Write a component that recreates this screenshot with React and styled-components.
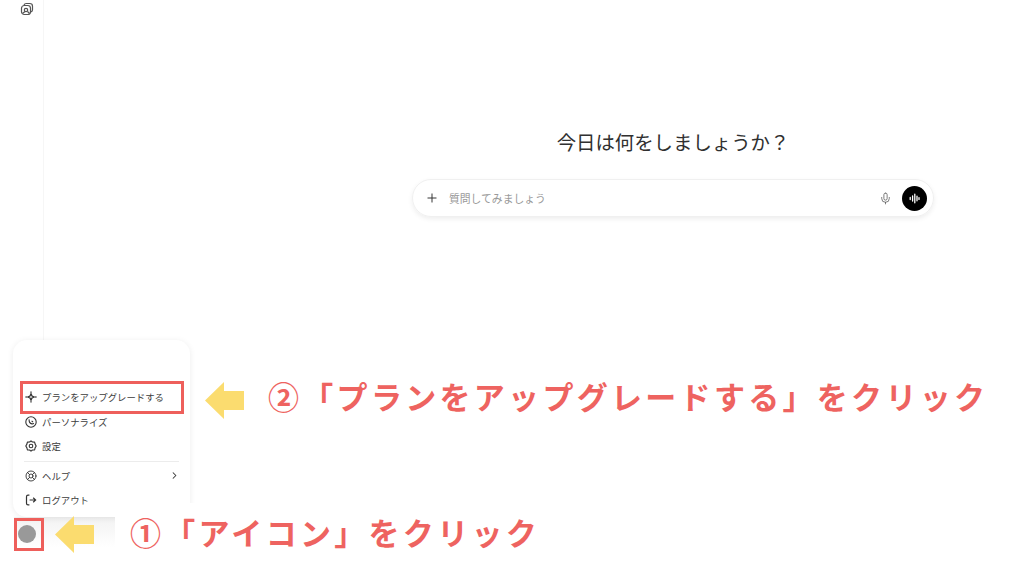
import React from "react";
import styled, { createGlobalStyle } from "styled-components";
import { ChevronRight, LifeBuoy, Mic, Plus } from "lucide-react";

const GlobalStyle = createGlobalStyle`
  html, body {
    margin: 0;
    padding: 0;
    background: #fff;
  }
  body {
    font-family: "Noto Sans CJK JP", "Noto Sans", sans-serif;
  }
`;

const Page = styled.div`
  position: relative;
  display: flex;
  width: 1024px;
  height: 576px;
  overflow: hidden;
  background: #fff;
`;

const Sidebar = styled.aside`
  width: 44px;
  height: 517px;
  box-sizing: border-box;
  padding: 2px 0 0 20px;
  border-right: 1px solid #f6f6f6;
  color: #555;

  svg {
    display: block;
  }
`;

const Main = styled.main`
  flex: 1;
  padding: 128px 0 0 368px;
`;

const Title = styled.h1`
  width: 522px;
  margin: 0 0 23px;
  font-size: 19.4px;
  line-height: 28px;
  font-weight: 400;
  text-align: center;
  color: #303030;
`;

const Composer = styled.div`
  display: flex;
  align-items: center;
  width: 522px;
  height: 38px;
  box-sizing: border-box;
  padding: 0 6px 0 12px;
  border: 1px solid #f0f0f0;
  border-radius: 19px;
  box-shadow: 0 2px 5px rgba(0, 0, 0, 0.07);
  color: #333;
`;

const Placeholder = styled.span`
  flex: 1;
  margin-left: 10px;
  font-size: 10.8px;
  color: #999;
`;

const VoiceButton = styled.span`
  display: flex;
  align-items: center;
  justify-content: center;
  width: 25px;
  height: 25px;
  margin-left: 10px;
  border-radius: 50%;
  background: #000;
  color: #fff;
`;

const MenuShadow = styled.div`
  position: absolute;
  left: 14px;
  top: 517px;
  width: 101px;
  height: 30px;
  background: linear-gradient(#f2f2f2, #fff);
`;

const Menu = styled.nav`
  position: absolute;
  left: 13px;
  top: 340px;
  width: 177px;
  height: 177px;
  box-sizing: border-box;
  padding: 45px 7px 0;
  border-radius: 14px;
  background: #fff;
  box-shadow: 0 1px 6px rgba(0, 0, 0, 0.08);
`;

const MenuItem = styled.div`
  display: flex;
  align-items: center;
  gap: 5px;
  height: 24.5px;
  padding: 0 3px 0 5px;
  font-size: 9.4px;
  color: #3c3c3c;
  white-space: nowrap;

  svg {
    flex: none;
    color: #333;
  }
`;

const MenuLabel = styled.span`
  flex: 1;
`;

const Divider = styled.hr`
  height: 1px;
  margin: 2px 4px;
  border: 0;
  background: #ececec;
`;

const Highlight = styled.div`
  position: absolute;
  left: ${(p) => p.$left}px;
  top: ${(p) => p.$top}px;
  width: ${(p) => p.$width}px;
  height: ${(p) => p.$height}px;
  box-sizing: border-box;
  border: 3px solid #ee5f5b;
`;

const Avatar = styled.span`
  position: absolute;
  left: 18px;
  top: 525px;
  width: 18px;
  height: 18px;
  border-radius: 50%;
  background: #999;
`;

const Arrow = styled.svg`
  position: absolute;
  left: ${(p) => p.$left}px;
  top: ${(p) => p.$top}px;
`;

const Callout = styled.div`
  position: absolute;
  left: ${(p) => p.$left}px;
  top: ${(p) => p.$top}px;
  padding: ${(p) => p.$padding};
  background: #fff;
  font-size: 31px;
  line-height: 36px;
  font-weight: 700;
  letter-spacing: 3.3px;
  color: #ee6360;
  white-space: nowrap;
`;

const CardsIcon = () => (
  <svg width="14" height="14" viewBox="0 0 14 14" fill="none" stroke="currentColor" strokeWidth="1.2">
    <rect x="1.5" y="3.5" width="9" height="9" rx="2.8" />
    <path d="M4 3.2C4.4 2 5 1.5 6.2 1.5h3.6c1.6 0 2.7 1.1 2.7 2.7v3.6c0 1-.5 1.8-1.6 2.2" />
    <circle cx="6" cy="8" r="1.7" />
    <path d="M2.5 11.5 5 9.5M7.5 9.5l2 2" />
  </svg>
);

const SparkIcon = () => (
  <svg width="12" height="12" viewBox="0 0 12 12" fill="none" stroke="currentColor" strokeWidth="1.3">
    <path d="M6 2.8 7 5l2.2 1L7 7 6 9.2 5 7 2.8 6 5 5z" />
    <path d="M6 .5v1.2M6 10.3v1.2M.5 6h1.2M10.3 6h1.2" />
  </svg>
);

const PersonalizeIcon = () => (
  <svg width="12" height="12" viewBox="0 0 12 12" fill="none" stroke="currentColor" strokeWidth="1.1">
    <circle cx="6" cy="6" r="5.2" />
    <path d="M4.2 3.4C3.8 5.6 4.8 7.6 7 7.9c.9.1 1.4-.2 1.8-.7" />
    <path d="M6.6 4.8 8 6" />
  </svg>
);

const GearIcon = () => (
  <svg width="12" height="12" viewBox="0 0 12 12" fill="none" stroke="currentColor" strokeWidth="1.1">
    <path d="M6 .8 7.4 2l2.2.1.5 2L11.2 6l-1.1 1.9-.5 2-2.2.1L6 11.2 4.6 10l-2.2-.1-.5-2L.8 6l1.1-1.9.5-2L4.6 2z" strokeLinejoin="round" />
    <circle cx="6" cy="6" r="1.8" />
  </svg>
);

const LogoutIcon = () => (
  <svg width="12" height="12" viewBox="0 0 12 12" fill="none" stroke="currentColor" strokeWidth="1.2">
    <path d="M4.4 1.2H3C2 1.2 1.5 1.8 1.5 2.8v6.4c0 1 .5 1.6 1.5 1.6h1.4" />
    <path d="M4.6 6h6M8.2 3.8 10.6 6 8.2 8.2" />
  </svg>
);

const WaveIcon = () => (
  <svg width="13" height="13" viewBox="0 0 13 13" fill="none" stroke="currentColor" strokeWidth="1.3" strokeLinecap="round">
    <path d="M2.2 5.5v2M4.6 4v5M6.8 2.2v8.6M9 4.2v4.6M11 5.6v1.8" />
  </svg>
);

const YellowArrow = ({ left, top }) => (
  <Arrow $left={left} $top={top} width="39" height="37" viewBox="0 0 39 37">
    <path d="M0 18.5 19 0v9h20v19H19v9z" fill="#fbdc6f" />
  </Arrow>
);

const items = [
  { icon: <SparkIcon />, label: "プランをアップグレードする" },
  { icon: <PersonalizeIcon />, label: "パーソナライズ" },
  { icon: <GearIcon />, label: "設定" },
];

export default function App() {
  return (
    <>
      <GlobalStyle />
      <Page>
        <Sidebar>
          <CardsIcon />
        </Sidebar>
        <Main>
          <Title>今日は何をしましょうか？</Title>
          <Composer>
            <Plus size={14} strokeWidth={1.7} />
            <Placeholder>質問してみましょう</Placeholder>
            <Mic size={13} strokeWidth={1.4} color="#555" />
            <VoiceButton>
              <WaveIcon />
            </VoiceButton>
          </Composer>
        </Main>

        <MenuShadow />
        <Menu>
          {items.map((item) => (
            <MenuItem key={item.label}>
              {item.icon}
              <MenuLabel>{item.label}</MenuLabel>
            </MenuItem>
          ))}
          <Divider />
          <MenuItem>
            <LifeBuoy size={12} strokeWidth={1.8} />
            <MenuLabel>ヘルプ</MenuLabel>
            <ChevronRight size={11} strokeWidth={2.2} />
          </MenuItem>
          <MenuItem>
            <LogoutIcon />
            <MenuLabel>ログアウト</MenuLabel>
          </MenuItem>
        </Menu>

        <Highlight $left={20} $top={381} $width={164} $height={33} />
        <YellowArrow left={205} top={382} />
        <Callout $left={268} $top={378} $padding="0">②「プランをアップグレードする」をクリック</Callout>

        <Avatar />
        <Highlight $left={14} $top={518} $width={30} $height={33} />
        <YellowArrow left={55} top={516} />
        <Callout $left={115} $top={503} $padding="11px 15px 23px">①「アイコン」をクリック</Callout>
      </Page>
    </>
  );
}
